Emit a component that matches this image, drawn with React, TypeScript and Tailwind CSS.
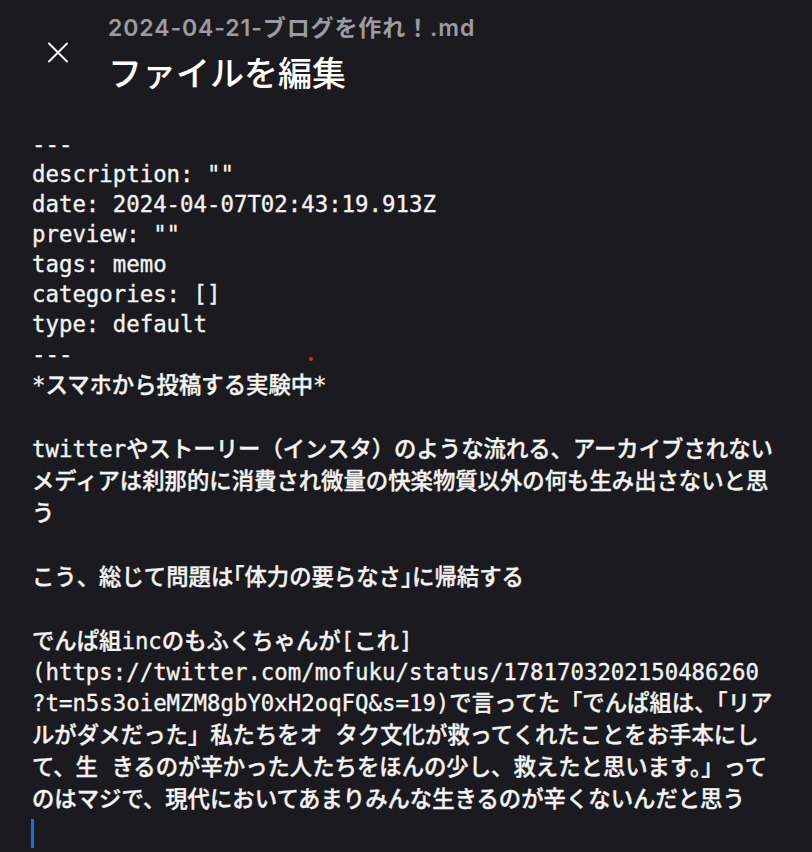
import React from "react";

type Line = { text: string; h: number };

const lines: Line[] = [
  { text: "---", h: 30 },
  { text: 'description: ""', h: 30 },
  { text: "date: 2024-04-07T02:43:19.913Z", h: 30 },
  { text: 'preview: ""', h: 30 },
  { text: "tags: memo", h: 30 },
  { text: "categories: []", h: 30 },
  { text: "type: default", h: 30 },
  { text: "---", h: 30 },
  { text: "*スマホから投稿する実験中*", h: 32 },
  { text: "", h: 32 },
  { text: "twitterやストーリー（インスタ）のような流れる、アーカイブされない", h: 32 },
  { text: "メディアは刹那的に消費され微量の快楽物質以外の何も生み出さないと思", h: 32 },
  { text: "う", h: 32 },
  { text: "", h: 32 },
  { text: "こう、総じて問題は｢体力の要らなさ｣に帰結する", h: 32 },
  { text: "", h: 32 },
  { text: "でんぱ組incのもふくちゃんが[これ]", h: 32 },
  { text: "(https://twitter.com/mofuku/status/1781703202150486260", h: 30 },
  { text: "?t=n5s3oieMZM8gbY0xH2oqFQ&s=19)で言ってた「でんぱ組は、「リア", h: 32 },
  { text: "ルがダメだった」私たちをオ タク文化が救ってくれたことをお手本にし", h: 32 },
  { text: "て、生 きるのが辛かった人たちをほんの少し、救えたと思います。」って", h: 32 },
  { text: "のはマジで、現代においてあまりみんな生きるのが辛くないんだと思う", h: 32 },
];

export default function App() {
  return (
    <div className="relative w-[812px] h-[852px] overflow-hidden bg-[#1b1b1f]">
      <header className="flex h-[130px]">
        <button className="ml-[48px] mt-[42px] h-[21px] w-[20px] self-start">
          <svg width="20" height="21" viewBox="0 0 20 21" fill="none">
            <path d="M1 1.5L19 19.5M19 1.5L1 19.5" stroke="#f2f2f2" strokeWidth="2" strokeLinecap="round" />
          </svg>
        </button>
        <div className="ml-[40px] flex flex-col font-['Inter','Noto_Sans_CJK_JP',sans-serif]">
          <div className="mt-[14px] h-[28px] text-[23px] leading-[28px] font-semibold tracking-[0.9px] text-[#9b9ba4] whitespace-pre">
            2024-04-21-ブログを作れ！.md
          </div>
          <div className="mt-[5px] h-[54px] text-[34px] leading-[54px] font-medium text-white whitespace-pre">
            ファイルを編集
          </div>
        </div>
      </header>
      <main className="pl-[32px] font-['DejaVu_Sans_Mono','Noto_Sans_CJK_JP',monospace] text-[22.37px] font-medium text-[#f2f2f2] [-webkit-text-stroke:0.35px_#f2f2f2]">
        {lines.map((l, i) => (
          <div
            key={i}
            className="flex items-center whitespace-pre"
            style={{ height: l.h }}
          >
            {l.text}
          </div>
        ))}
        <div className="h-[32px] pt-[3px]">
          <div className="ml-[-1px] h-[29px] w-[3px] bg-[#1f6fdc]" />
        </div>
      </main>
      <span className="absolute left-[309px] top-[357px] h-[4px] w-[4px] rounded-full bg-[#e3262a]" />
    </div>
  );
}
